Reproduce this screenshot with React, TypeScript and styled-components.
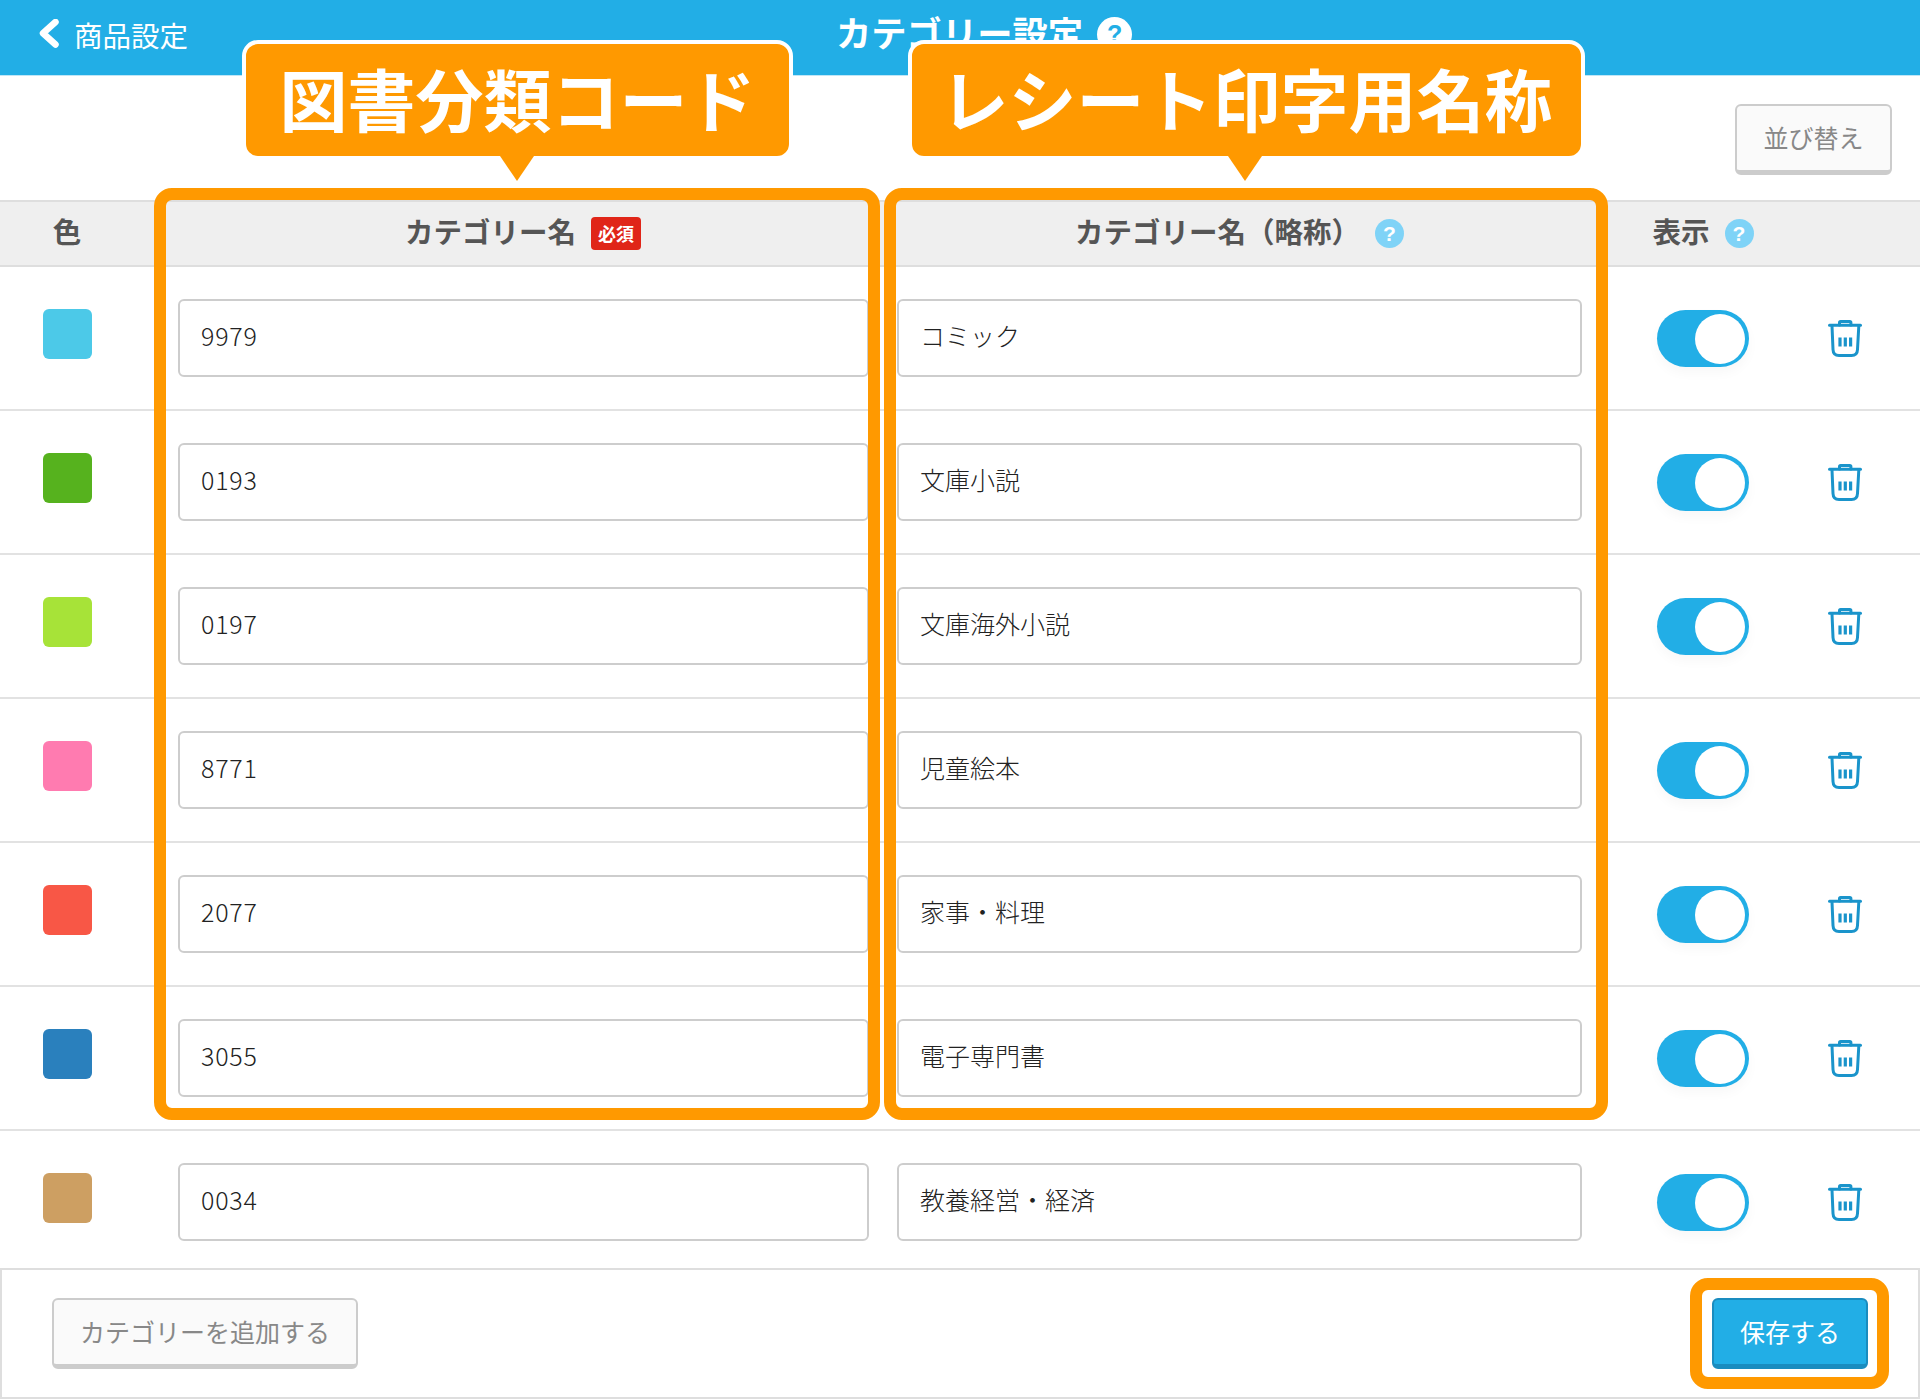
import React from "react";
import styled, { createGlobalStyle } from "styled-components";

const Global = createGlobalStyle`
  html, body { margin: 0; padding: 0; background: #fff; }
  body { font-family: "Noto Sans CJK JP", "Noto Sans", sans-serif; }
  * { box-sizing: border-box; }
`;

const COLUMNS = "178px 719px 760px 171px 92px";

const Page = styled.div`
  position: relative;
  width: 1920px;
  height: 1400px;
  overflow: hidden;
  background: #fff;
`;
const NavBar = styled.header`
  height: 76px;
  background: #22aee6;
  border-bottom: 1px solid #bfe6f7;
  display: flex;
  align-items: flex-start;
  color: #fff;
`;
const BackLink = styled.div`
  width: 836px;
  padding: 17px 0 0 38px;
  display: flex;
  align-items: center;
  gap: 12px;
  font-size: 28.5px;
  line-height: 36px;
`;
const NavTitle = styled.div`
  display: flex;
  align-items: center;
  gap: 14px;
  padding-top: 11px;
  font-size: 35.3px;
  line-height: 42px;
  font-weight: 700;
`;
const NavTitleText = styled.span`
  padding-bottom: 4px;
`;
const HelpDot = styled.span<{ $size: number; $bg: string; $fg: string }>`
  width: ${(p) => p.$size}px;
  height: ${(p) => p.$size}px;
  border-radius: 50%;
  background: ${(p) => p.$bg};
  color: ${(p) => p.$fg};
  font-size: ${(p) => Math.round(p.$size * 0.72)}px;
  font-weight: 700;
  line-height: ${(p) => p.$size}px;
  text-align: center;
  font-family: "Liberation Sans", sans-serif;
  flex: none;
`;
const Toolbar = styled.div`
  height: 124px;
  padding: 28px 28px 0 0;
  display: flex;
  justify-content: flex-end;
  align-items: flex-start;
`;
const Button = styled.button<{ $w: number; $h: number; $primary?: boolean }>`
  width: ${(p) => p.$w}px;
  height: ${(p) => p.$h}px;
  border-radius: 6px;
  border: 2px solid ${(p) => (p.$primary ? "#1a8cbf" : "#cccccc")};
  border-bottom-width: 5px;
  background: ${(p) => (p.$primary ? "#22aee6" : "#fafafa")};
  color: ${(p) => (p.$primary ? "#fff" : "#888888")};
  font-family: inherit;
  font-size: 25px;
  line-height: 36px;
  padding: 0 0 3px;
`;
const HeadRow = styled.div`
  height: 67px;
  background: #efefef;
  border-top: 2px solid #dedede;
  border-bottom: 2px solid #dedede;
  display: grid;
  grid-template-columns: ${COLUMNS};
  align-items: center;
  color: #555;
  font-size: 28.5px;
  font-weight: 700;
`;
const HeadCell = styled.div<{ $w: number }>`
  width: ${(p) => p.$w}px;
  display: flex;
  justify-content: center;
  align-items: center;
  gap: 15px;
  line-height: 40px;
`;
const HeadText = styled.span`
  padding-bottom: 6px;
`;
const ShowHead = styled(HeadCell)`
  margin-left: -5px;
`;
const RequiredBadge = styled.span`
  width: 50px;
  height: 33px;
  border-radius: 4px;
  background: #e02518;
  color: #fff;
  font-size: 18px;
  line-height: 32px;
  text-align: center;
`;
const Row = styled.div`
  height: 144px;
  padding-top: 32px;
  border-bottom: 2px solid #e2e2e2;
  display: grid;
  grid-template-columns: ${COLUMNS};
  align-items: start;
`;
const RowList = styled.div`
  & > ${Row}:last-child {
    height: 137px;
    border-bottom: none;
  }
`;
const Swatch = styled.div<{ $color: string }>`
  width: 49px;
  height: 50px;
  margin: 10px 0 0 43px;
  border-radius: 6px;
  background: ${(p) => p.$color};
`;
const TextInput = styled.input<{ $w: number; $spacing?: number }>`
  width: ${(p) => p.$w}px;
  height: 78px;
  border: 2px solid #cdcdcd;
  border-radius: 6px;
  padding: 0 0 6px 21px;
  background: #fff;
  color: #222;
  font-family: inherit;
  font-size: 25px;
  font-weight: 300;
  letter-spacing: ${(p) => p.$spacing ?? 0}px;
  outline: none;
`;
const Toggle = styled.div`
  width: 92px;
  height: 57px;
  margin-top: 11px;
  border-radius: 29px;
  background: #22aee6;
  display: flex;
  justify-content: flex-end;
  align-items: center;
  padding-right: 4px;
  box-shadow: 0 6px 12px rgba(0, 0, 0, 0.03);
`;
const Knob = styled.span`
  width: 50px;
  height: 50px;
  border-radius: 50%;
  background: #fff;
`;
const TrashButton = styled.div`
  width: 34px;
  height: 37px;
  margin-top: 21px;
  color: #1a94cb;
`;
const Footer = styled.footer`
  height: 131px;
  border: 2px solid #dedede;
  padding: 28px 50px 0;
  display: flex;
  justify-content: space-between;
  align-items: flex-start;
`;

/* annotation layer: lies over the page */
const Callout = styled.div<{ $left: number; $w: number; $tip: number }>`
  position: absolute;
  left: ${(p) => p.$left}px;
  top: 40px;
  width: ${(p) => p.$w}px;
  height: 120px;
  border: 4px solid #fff;
  border-radius: 16px;
  background: #ff9900;
  color: #fff;
  font-size: 68px;
  font-weight: 700;
  line-height: 108px;
  text-align: center;
  white-space: nowrap;
  &::after {
    content: "";
    position: absolute;
    left: ${(p) => p.$tip}px;
    top: 112px;
    border-left: 17px solid transparent;
    border-right: 17px solid transparent;
    border-top: 25px solid #ff9900;
  }
`;
const Frame = styled.div<{ $l: number; $t: number; $w: number; $h: number }>`
  position: absolute;
  left: ${(p) => p.$l}px;
  top: ${(p) => p.$t}px;
  width: ${(p) => p.$w}px;
  height: ${(p) => p.$h}px;
  border: 12px solid #ff9900;
  border-radius: 18px;
  pointer-events: none;
`;

const Chevron = () => (
  <svg width="24" height="32" viewBox="0 0 24 32" fill="none">
    <path d="M17.5 3 L5 14.25 L17.5 25.5" stroke="#fff" strokeWidth="6.5" strokeLinecap="round" strokeLinejoin="round" />
  </svg>
);

const TrashIcon = () => (
  <svg width="34" height="37" viewBox="0 0 34 37" fill="none" stroke="currentColor" strokeWidth="3" strokeLinecap="round" strokeLinejoin="round">
    <path d="M1.5 5.2 H32.5" />
    <path d="M11.5 5 V2.6 Q11.5 1.5 12.6 1.5 H21.8 Q22.9 1.5 22.9 2.6 V5" />
    <path d="M4 6 L5 29.5 Q5.2 35.5 11 35.5 H23.5 Q29.3 35.5 29.5 29.5 L30.8 6" />
    <path d="M12 17.5 V26.5 M17.3 17.5 V26.5 M22.6 17.5 V26.5" strokeWidth="3.2" strokeLinecap="butt" />
  </svg>
);

const rows: [string, string, string][] = [
  ["#4cc9e8", "9979", "コミック"],
  ["#56b21e", "0193", "文庫小説"],
  ["#a7e338", "0197", "文庫海外小説"],
  ["#ff7bb0", "8771", "児童絵本"],
  ["#f85746", "2077", "家事・料理"],
  ["#2a80bd", "3055", "電子専門書"],
  ["#cd9f62", "0034", "教養経営・経済"],
];

export default function App() {
  return (
    <Page>
      <Global />
      <NavBar>
        <BackLink>
          <Chevron />
          <span>商品設定</span>
        </BackLink>
        <NavTitle>
          <NavTitleText>カテゴリー設定</NavTitleText>
          <HelpDot $size={35} $bg="#fff" $fg="#22aee6">?</HelpDot>
        </NavTitle>
      </NavBar>
      <Toolbar>
        <Button $w={157} $h={71}>並び替え</Button>
      </Toolbar>
      <HeadRow>
        <HeadCell $w={134}><HeadText>色</HeadText></HeadCell>
        <HeadCell $w={690}>
          <HeadText>カテゴリー名</HeadText>
          <RequiredBadge>必須</RequiredBadge>
        </HeadCell>
        <HeadCell $w={685}>
          <HeadText>カテゴリー名（略称）</HeadText>
          <HelpDot $size={29} $bg="#7fd3f7" $fg="#fff">?</HelpDot>
        </HeadCell>
        <ShowHead $w={102}>
          <HeadText>表示</HeadText>
          <HelpDot $size={29} $bg="#7fd3f7" $fg="#fff">?</HelpDot>
        </ShowHead>
      </HeadRow>
      <RowList>
        {rows.map(([color, code, name]) => (
          <Row key={code}>
            <Swatch $color={color} />
            <TextInput $w={691} $spacing={0.8} readOnly value={code} />
            <TextInput $w={685} readOnly value={name} />
            <Toggle>
              <Knob />
            </Toggle>
            <TrashButton>
              <TrashIcon />
            </TrashButton>
          </Row>
        ))}
      </RowList>
      <Footer>
        <Button $w={306} $h={71}>カテゴリーを追加する</Button>
        <Button $w={156} $h={71} $primary>保存する</Button>
      </Footer>

      <Frame $l={154} $t={188} $w={726} $h={932} />
      <Frame $l={884} $t={188} $w={724} $h={932} />
      <Frame $l={1690} $t={1278} $w={199} $h={111} />
      <Callout $left={242} $w={551} $tip={254}>図書分類コード</Callout>
      <Callout $left={908} $w={677} $tip={316}>レシート印字用名称</Callout>
    </Page>
  );
}
